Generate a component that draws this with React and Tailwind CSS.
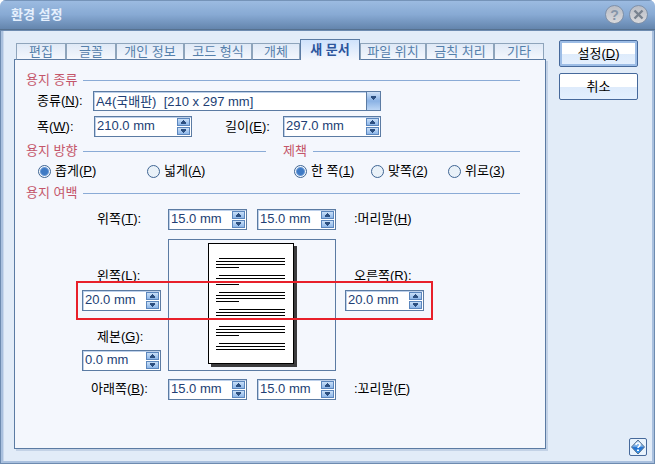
import React, { useState } from 'react';

const TABS = [
  { name: '편집', width: 'w-[50px]' },
  { name: '글꼴', width: 'w-[50px]' },
  { name: '개인 정보', width: 'w-[68px]' },
  { name: '코드 형식', width: 'w-[68px]' },
  { name: '개체', width: 'w-[48px]' },
  { name: '새 문서', width: 'w-[60px]' },
  { name: '파일 위치', width: 'w-[66px]' },
  { name: '금칙 처리', width: 'w-[68px]' },
  { name: '기타', width: 'w-[50px]' },
];

const Tabs = ({ active, onSelect }) => (
  <div role="tablist" className="relative z-10 -mb-px flex items-end pl-0.5">
    {TABS.map(({ name, width }) =>
      name === active ? (
        <button
          key={name}
          role="tab"
          aria-selected="true"
          className={`${width} h-[21px] shrink-0 border border-b-0 border-[#5b7ba3] bg-linear-to-b from-[#cfe2fb] to-[#f4f7fd] font-bold leading-5 text-[#2c559c] whitespace-nowrap`}
        >
          {name}
        </button>
      ) : (
        <button
          key={name}
          role="tab"
          aria-selected="false"
          onClick={() => onSelect(name)}
          className={`${width} h-[17px] shrink-0 border border-[#8ea4bb] border-b-[#5b7ba3] bg-linear-to-b from-[#dfe9f6] to-[#f4f7fd] leading-4 text-[#5580ab] whitespace-nowrap`}
        >
          {name}
        </button>
      )
    )}
  </div>
);

const SectionTitle = ({ children, className = '' }) => (
  <div className={`flex h-5 items-center gap-1.5 ${className}`}>
    <h2 className="leading-5 text-[#c4566a] whitespace-nowrap">{children}</h2>
    <span className="h-px flex-1 bg-[#8aabd6]" />
  </div>
);

const Arrow = ({ down }) => (
  <svg width="7" height="4" viewBox="0 0 7 4" className="fill-[#2c4f80]" shapeRendering="crispEdges">
    {down ? <path d="M1 0h5v2h-1v1h-1v1h-1v-1h-1v-1h-1z" /> : <path d="M1 4h5v-2h-1v-1h-1v-1h-1v1h-1v1h-1z" />}
  </svg>
);

const SPIN_BUTTON =
  'flex h-2 w-[13px] items-center justify-center border border-[#5b86bd] bg-linear-to-b from-[#c9dff7] to-[#8db6e8]';

const Spinner = ({ id, initial, className = 'w-[79px]' }) => {
  const [value, setValue] = useState(initial);
  const step = (by) => setValue((v) => `${Math.max(0, parseFloat(v) + by).toFixed(1)} mm`);

  return (
    <div className={`flex h-[21px] items-center border border-[#5b7ba3] bg-white pr-px shadow-[inset_1px_1px_0_#bdd0ea] ${className}`}>
      <input
        id={id}
        value={value}
        onChange={(e) => setValue(e.target.value)}
        className="h-[19px] w-0 min-w-0 flex-1 bg-transparent pb-0.5 pl-0.5 text-[#213e74] outline-none"
      />
      <div className="flex flex-col gap-px">
        <button aria-label="늘리기" onClick={() => step(1)} className={SPIN_BUTTON}>
          <Arrow />
        </button>
        <button aria-label="줄이기" onClick={() => step(-1)} className={SPIN_BUTTON}>
          <Arrow down />
        </button>
      </div>
    </div>
  );
};

const Radio = ({ name, defaultChecked, children, className = '' }) => (
  <label className={`flex items-center gap-1 leading-5 whitespace-nowrap ${className}`}>
    <input
      type="radio"
      name={name}
      defaultChecked={defaultChecked}
      className="size-[13px] shrink-0 appearance-none rounded-full border border-[#3f6593] bg-[#e9f1f8] checked:bg-[radial-gradient(circle,#3f7ac4_0_3px,#6a9ad6_4px,#f4f8fd_5px)]"
    />
    <span>{children}</span>
  </label>
);

const Label = ({ id, children, className = '' }) => (
  <label htmlFor={id} className={`block leading-5 whitespace-nowrap ${className}`}>
    {children}
  </label>
);

const PagePreview = () => (
  <svg width="90" height="126" viewBox="0 0 90 126" className="ml-[39px] mt-[3px]" shapeRendering="crispEdges">
    <rect x="3" y="3" width="86" height="121" fill="#3c3c3e" />
    <rect x="0.5" y="0.5" width="85" height="120" fill="#fff" stroke="#000" />
    {[15, 32, 49, 66, 83, 100].map((y) => (
      <g key={y} fill="#000">
        <rect x="11" y={y} width="66" height="1" />
        <rect x="8" y={y + 3} width="69" height="1" />
        <rect x="8" y={y + 6} width="69" height="1" />
        {y < 100 && <rect x="8" y={y + 9} width="23" height="1" />}
      </g>
    ))}
  </svg>
);

const Margins = () => (
  <div className="relative ml-14 mt-1.5 grid grid-cols-[86px_168px_1fr]">
    <Label id="top" className="pl-[15px]">
      위쪽(<u>T</u>):
    </Label>
    <div className="flex justify-between">
      <Spinner id="top" initial="15.0 mm" />
      <Spinner id="header" initial="15.0 mm" />
    </div>
    <Label id="header" className="pl-[18px]">
      :머리말(<u>H</u>)
    </Label>

    <div className="mt-[9px] flex flex-col justify-end">
      <Label id="left" className="mb-1 pl-[15px]">
        왼쪽(<u>L</u>):
      </Label>
      <Spinner id="left" initial="20.0 mm" />
      <Label id="gutter" className="mb-[3px] mt-4 pl-[15px]">
        제본(<u>G</u>):
      </Label>
      <Spinner id="gutter" initial="0.0 mm" />
    </div>
    <div className="mt-[9px] h-[132px] border border-[#5b7ba3]">
      <PagePreview />
    </div>
    <div className="mt-9 pl-[9px]">
      <Label id="right" className="mb-1 pl-[9px]">
        오른쪽(<u>R</u>):
      </Label>
      <Spinner id="right" initial="20.0 mm" />
    </div>

    <Label id="bottom" className="mt-2 pl-[9px]">
      아래쪽(<u>B</u>):
    </Label>
    <div className="mt-2 flex justify-between">
      <Spinner id="bottom" initial="15.0 mm" />
      <Spinner id="footer" initial="15.0 mm" />
    </div>
    <Label id="footer" className="mt-2 pl-[18px]">
      :꼬리말(<u>F</u>)
    </Label>

    {/* highlight over left and right margins */}
    <div className="pointer-events-none absolute -left-1.5 top-[72px] h-[39px] w-[357px] border-2 border-[#e8202a]" />
  </div>
);

const TitleBar = () => (
  <header className="flex h-[30px] items-center border-b border-[#56718f] bg-linear-to-b from-[#9dbce2] via-[#88aad4] to-[#6485ad] px-[7px] shadow-[inset_0_1px_0_#7593b8]">
    <h1 className="flex-1 pl-1 font-bold text-[#e6f0fd]">환경 설정</h1>
    <div className="flex gap-[5px]">
      <button aria-label="도움말" className="flex size-[19px] items-center justify-center rounded-full border border-[#7f90a8] bg-linear-to-b from-[#b9bdc6] to-[#d9d9dc] text-sm font-bold leading-none text-[#8796a9]">
        ?
      </button>
      <button aria-label="닫기" className="flex size-[19px] items-center justify-center rounded-full border border-[#7f90a8] bg-linear-to-b from-[#b9bdc6] to-[#d9d9dc]">
        <svg width="11" height="11" viewBox="0 0 11 11" stroke="#78828f" strokeWidth="2.4">
          <path d="M1.5 1.5l8 8M9.5 1.5l-8 8" />
        </svg>
      </button>
    </div>
  </header>
);

const SideButton = ({ children, primary }) => (
  <button
    className={`h-[27px] w-full rounded-xs border border-[#46699b] bg-linear-to-b from-white from-50% via-[#deebfb] via-50% to-[#e4f0fe] text-black ${
      primary ? 'shadow-[inset_0_0_0_2px_#9dbde6]' : ''
    }`}
  >
    {children}
  </button>
);

const HelpButton = () => (
  <button aria-label="도움말 보기" className="flex size-[18px] items-center justify-center self-end rounded-xs border border-[#46699b] bg-[#e9f3fd]">
    <svg width="16" height="16" viewBox="0 0 16 16">
      <defs>
        <linearGradient id="gem" x1="0" y1="0" x2="0" y2="1">
          <stop offset="0" stopColor="#c3dbf3" />
          <stop offset="0.45" stopColor="#76aee8" />
          <stop offset="0.55" stopColor="#1f6fd0" />
          <stop offset="1" stopColor="#3fa0f4" />
        </linearGradient>
      </defs>
      <path d="M8 1l6.5 7L8 15 1.5 8z" fill="url(#gem)" stroke="#55708f" />
      <path d="M6 6c0-2.6 4-2.6 4 0 0 1.3-2 1.4-2 3" fill="none" stroke="#fff" strokeWidth="1.5" />
      <rect x="7" y="10.5" width="2" height="1.5" fill="#fff" />
    </svg>
  </button>
);

export default function App() {
  const [tab, setTab] = useState('새 문서');

  return (
    <div className="flex min-h-screen w-full flex-col overflow-hidden rounded-t-md bg-[#e2ecf8] font-['Liberation_Sans','Noto_Sans_CJK_KR',sans-serif] text-[13px] text-black">
      <TitleBar />
      <main className="flex flex-1 gap-[13px] border-x-3 border-b-3 border-[#a9c0de] pb-[5px] pl-[11px] pr-[5px] pt-[9px] shadow-[inset_1px_0_0_#c9d8ec] outline outline-1 -outline-offset-1 outline-[#6d8bb0]">
        <div className="flex min-w-0 flex-1 flex-col pb-[7px]">
          <Tabs active={tab} onSelect={setTab} />
          <section className="flex-1 border border-[#5b7ba3] bg-[#f4f7fd] pl-[11px] pr-[25px] pt-2.5 shadow-[2px_2px_0_#c3d2e6]">
            <SectionTitle>용지 종류</SectionTitle>
            <div className="mt-px flex h-5 items-center">
              <Label id="paper" className="w-[67px] pl-[11px]">
                종류(<u>N</u>):
              </Label>
              <div className="relative h-5 w-[288px] border border-[#5b7ba3] bg-white shadow-[inset_1px_1px_0_#bdd0ea]">
                <select id="paper" className="h-[18px] w-full appearance-none bg-transparent pl-0.5 pr-4 text-[#213e74] outline-none">
                  <option>A4(국배판){'\u00a0 '}[210 x 297 mm]</option>
                </select>
                <span className="pointer-events-none absolute inset-y-0 right-0 flex w-[14px] justify-center border-l border-[#5b7ba3] bg-linear-to-b from-[#cfe1f7] via-[#8ab2e4] to-[#bcd6f5] pt-1">
                  <Arrow down />
                </span>
              </div>
            </div>
            <div className="mt-[5px] flex h-[21px] items-center">
              <Label id="width" className="w-[68px] pl-[11px]">
                폭(<u>W</u>):
              </Label>
              <Spinner id="width" initial="210.0 mm" className="w-[98px]" />
              <Label id="length" className="w-[91px] pl-[33px]">
                길이(<u>E</u>):
              </Label>
              <Spinner id="length" initial="297.0 mm" className="w-[98px]" />
            </div>

            <div className="mt-1 flex gap-[17px]">
              <fieldset className="w-[240px]">
                <SectionTitle>용지 방향</SectionTitle>
                <div className="flex pl-3">
                  <Radio name="direction" defaultChecked className="w-[109px]">
                    좁게(<u>P</u>)
                  </Radio>
                  <Radio name="direction">
                    넓게(<u>A</u>)
                  </Radio>
                </div>
              </fieldset>
              <fieldset className="flex-1">
                <SectionTitle>제책</SectionTitle>
                <div className="flex pl-[11px]">
                  <Radio name="binding" defaultChecked className="w-[77px]">
                    한 쪽(<u>1</u>)
                  </Radio>
                  <Radio name="binding" className="w-[77px]">
                    맞쪽(<u>2</u>)
                  </Radio>
                  <Radio name="binding">
                    위로(<u>3</u>)
                  </Radio>
                </div>
              </fieldset>
            </div>

            <SectionTitle className="mt-0.5">용지 여백</SectionTitle>
            <Margins />
          </section>
        </div>
        <aside className="flex w-[88px] flex-col justify-between">
          <div className="flex w-[79px] flex-col gap-1.5 pt-px">
            <SideButton primary>
              설정(<u>D</u>)
            </SideButton>
            <SideButton>취소</SideButton>
          </div>
          <HelpButton />
        </aside>
      </main>
    </div>
  );
}
